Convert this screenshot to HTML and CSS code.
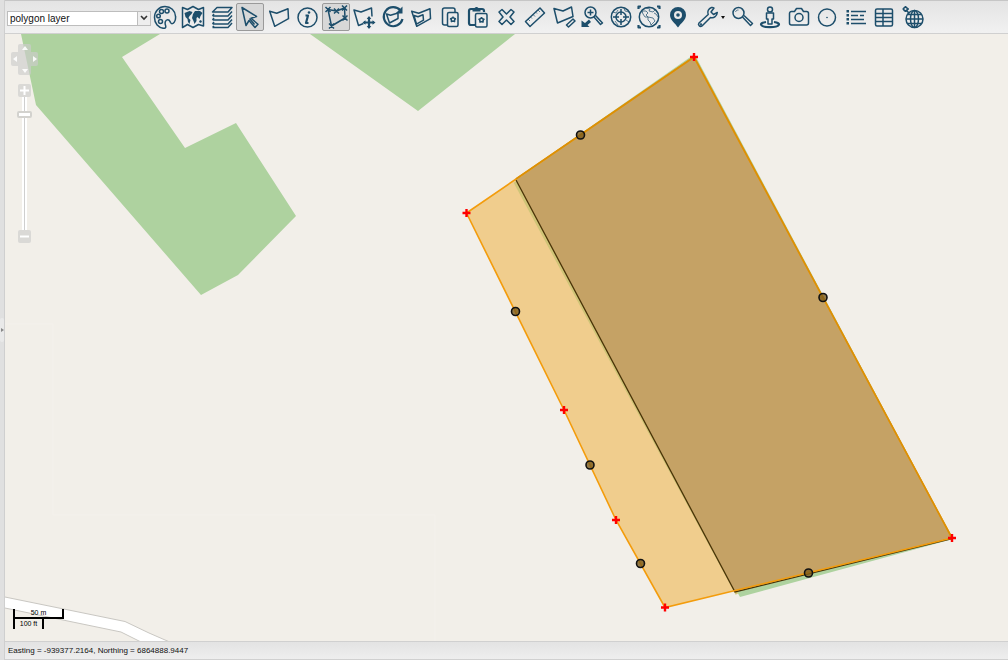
FILE: index.html
```html
<!DOCTYPE html>
<html lang="en">
<head>
<meta charset="utf-8">
<title>Map editor</title>
<link rel="stylesheet" href="styles.css">
</head>
<body>
<div class="app">
  <button class="splitter" type="button" aria-label="Expand side panel"><span class="splitter-grip"></span></button>
  <main class="workspace">
    <div class="toolbar" role="toolbar" aria-label="Map tools">
      <label class="layer-picker">
        <select class="layer-select" aria-label="Layer"><option>polygon layer</option></select>
        <span class="layer-arrow"><svg viewBox="0 0 8 6"><path d="M1 1l3 3 3-3"/></svg></span>
      </label>
      <div class="tools">
        <button class="tool" type="button" aria-label="Style"><svg viewBox="0 0 24 24"><path d="M12 1.500C6 1.500 1.500 6.300 1.500 12.500S5.500 23 10.500 23.300c2 .2 2.700-1 2-3-1-3 0-5.300 2.200-5.500 1.800-.1 2 1 2.800 2.700 1 1.800 2.700 1.300 3.800-.3 1-1.500 1.500-3.500 1.200-6C22 5.500 18 1.500 12 1.500z"/><circle cx="8.500" cy="6.500" r="2"/><circle cx="14" cy="6" r="2"/><circle cx="5.500" cy="11" r="1.800"/><circle cx="7.500" cy="16.500" r="2"/></svg></button>
        <button class="tool" type="button" aria-label="Base map"><svg viewBox="0 0 24 24"><path d="M1.500 2.500l5 2L12 1.500l5.500 3 5-2V21l-5-1.500L12 22.500l-5.500-3-5 3z"/><path class="solid" d="M3.500 8l5-2 3 1-1 2-2 2-1 2 2 2-1 4-1.500-2-.5-3-2-2zM12 9l2-3 5 0 2.500 2-2 3-1 3-2-2-1 1 0 3-2 3-1-3-1.500-3zM18 16l2-1 1 2-2 1z"/></svg></button>
        <button class="tool" type="button" aria-label="Layers"><svg viewBox="0 0 24 24"><path d="M7 2.500h15l-4 4.500H2.500zM2.500 11H18l4-4.500M2.500 15H18l4-4.500M2.500 19H18l4-4.500M2.500 22.500H18l4-4.500M2.500 11l1.500-2M2.500 15L4 13M2.500 19L4 17M2.500 22.500L4 21"/></svg></button>
        <button class="tool pressed" type="button" aria-label="Select" aria-pressed="true"><svg viewBox="0 0 24 24"><path d="M4 2.500l14.500 9-5.500 1.800 7 6-3 3.200-6-7-3 5z"/><path d="M11.500 13.500l5 6"/></svg></button>
        <button class="tool" type="button" aria-label="Draw polygon"><svg viewBox="0 0 24 24"><path d="M2.700 6.300l7 2L21 3.700l.5 10L7.700 21.300z"/></svg></button>
        <button class="tool" type="button" aria-label="Information"><svg viewBox="0 0 24 24"><circle cx="12.500" cy="12.500" r="9.500"/><path class="thick" d="M10.500 10.500H13l-2 7.500h2.500"/><circle class="solid" cx="14" cy="7.500" r="1.300"/></svg></button>
        <button class="tool pressed" type="button" aria-label="Edit vertices" aria-pressed="true"><svg viewBox="0 0 24 24"><path d="M4 4.500L12.500 6 20.500 3l.5 10L7.500 21z"/><path d="M1.500 2l5 5M6.500 2l-5 5M10 3.500l5 5M15 3.500l-5 5M18 .5l5 5M23 .5l-5 5M18.500 10.500l5 5M23.500 10.500l-5 5M5 18.500l5 5M10 18.500l-5 5"/></svg></button>
        <button class="tool" type="button" aria-label="Move"><svg viewBox="0 0 24 24"><path d="M11.500 18.500l-5 2L2 5l7 2 10.500-4 .5 8.500"/><path class="thick" d="M17 12.500v10M12 17.500h10"/><path class="solid" d="M17 11l2.300 3h-4.600zM17 24l2.300-3h-4.600zM10.500 17.500l3-2.300v4.600zM23.500 17.500l-3-2.300v4.600z"/></svg></button>
        <button class="tool" type="button" aria-label="Rotate"><svg viewBox="0 0 24 24"><path class="thick" d="M19.500 5.500A9.500 9.500 0 1 0 21.500 14"/><path class="solid" d="M21.500 1.500v7h-7z"/><path d="M5.500 9l4 1.200L17 8v5.500L8.500 18z"/></svg></button>
        <button class="tool" type="button" aria-label="Resize"><svg viewBox="0 0 24 24"><path d="M2.700 6.300l7 2L21 3.700l.5 10L7.700 21.300z"/><path d="M5 10.500l4 1.200 5-2 .5 5.500-7 4z"/></svg></button>
        <button class="tool" type="button" aria-label="Copy"><svg viewBox="0 0 24 24"><path d="M9 20H6.500a2 2 0 0 1-2-2V5a2 2 0 0 1 2-2h8.500a2 2 0 0 1 2 2v2"/><rect x="9.500" y="7.500" width="10.500" height="14" rx="1.500"/><circle cx="15" cy="14.500" r="1.800"/><path d="M15 11.500v1M12 13.500l1 .5M18 13.500l-1 .5M13 17l.7-.8M17 17l-.7-.8"/></svg></button>
        <button class="tool" type="button" aria-label="Paste"><svg viewBox="0 0 24 24"><path class="thick" d="M9 20H5a2 2 0 0 1-2-2V6a2 2 0 0 1 2-2h11a2 2 0 0 1 2 2v1"/><path class="solid" d="M6.500 6.500V3.500h2C9 1.500 12 1.500 12.500 3.500h2v3z"/><rect x="9.500" y="8.500" width="11.500" height="13.500" rx="1.500"/><circle cx="15.500" cy="15" r="1.800"/><path d="M15.500 12v1M12.500 14l1 .5M18.500 14l-1 .5M13.500 17.500l.7-.8M17.500 17.500l-.7-.8"/></svg></button>
        <button class="tool" type="button" aria-label="Delete"><svg viewBox="0 0 24 24"><path d="M7 4.500l4.500 4.500L16 4.500l3 2.500-4 5 4 4.500-3 3-4.500-4.500L7 19.500l-3-3L8 12 4 7z"/></svg></button>
        <button class="tool" type="button" aria-label="Measure distance"><svg viewBox="0 0 24 24"><path d="M2.500 16.500L17 3l4.500 5L7 21.500z"/><path class="thin" d="M5 14l2 2M7.500 12l1.500 1.500M10 9.500l2 2M12.500 7l1.500 1.500M15 5l2 2"/></svg></button>
        <button class="tool" type="button" aria-label="Measure area"><svg viewBox="0 0 24 24"><path d="M2 3.500l9 2.500 8.500-4 1.500 9.500L5.500 18z"/><path d="M14.500 20l6.500-6 2 2-6.500 6z"/></svg></button>
        <button class="tool" type="button" aria-label="Zoom to layer"><svg viewBox="0 0 24 24"><circle cx="10.500" cy="7.500" r="5.500"/><path d="M7.500 7.500h6M10.500 4.500v6M14 12l6.500 7.500 2-1.500-7-7.500"/><path class="solid" d="M1.500 15.500v6.500h8l-2-2 3.500-3-2-2.500-4 3.500z"/></svg></button>
        <button class="tool" type="button" aria-label="Centre map"><svg viewBox="0 0 24 24"><circle cx="12" cy="12" r="9.700"/><circle cx="12" cy="12" r="5"/><path d="M12 4v6M12 14v6M4 12h6M14 12h6"/><path class="thin" d="M4 7l3 1 2-3M15 3l1 3 4 1M17 15l3 2M6 16l3 4"/></svg></button>
        <button class="tool" type="button" aria-label="Full extent"><svg viewBox="0 0 24 24"><circle cx="12" cy="12" r="9.700"/><path class="thick" d="M1.500 4V1.500H4M20 1.500h2.500V4M22.500 20v2.500H20M4 22.500H1.500V20"/><path class="thin" d="M5 6l4 0 2 2-2 2 2 2-3 0-2-3zM9 3l4 1-1 2 4 1 2-2M11 12l5 1 2 3-4 4-1-3-2-2zM17 8l2 1 2 3"/></svg></button>
        <button class="tool" type="button" aria-label="Find location"><svg viewBox="0 0 24 24"><path class="hole" fill-rule="evenodd" d="M12 2a8 8 0 0 0-8 8c0 5 5 8 8 12.500C15 18 20 15 20 10a8 8 0 0 0-8-8zm0 4a4 4 0 1 1 0 8 4 4 0 0 1 0-8z"/><circle class="solid" cx="12" cy="10" r="1.800"/></svg></button>
      </div>
      <button class="tool tool-menu" type="button" aria-label="Settings" aria-haspopup="menu"><svg viewBox="0 0 24 24"><path d="M15.500 2.500c-3 1-4.500 4-3.300 7L3 18c-1.500 2 1 4.500 3 3l8.500-8.500c3.500 1 6.500-1.500 6.800-5l-3.800 2-2.500-2.500 3-4c-.8-.6-1.500-.8-2.500-.5z"/><circle cx="5" cy="19.500" r=".5"/></svg><span class="menu-caret"></span></button>
      <div class="tools">
        <button class="tool" type="button" aria-label="Search"><svg viewBox="0 0 24 24"><circle cx="8.500" cy="8" r="5.500"/><path d="M12.500 12l8 8.500 2-2-8.500-8"/><path class="thin" d="M5.500 7c.5-1.500 1.500-2 3-2"/></svg></button>
        <button class="tool" type="button" aria-label="Street view"><svg viewBox="0 0 24 24"><circle cx="12" cy="4.500" r="2.500"/><path d="M8.500 8h7v6H14v5h-4v-5H8.500z"/><path class="thick" d="M8 17c-8 1-6 5.200 4 5.200s12-4.200 4-5.200"/></svg></button>
        <button class="tool" type="button" aria-label="Snapshot"><svg viewBox="0 0 24 24"><path d="M4.500 6.500h3l2-3h5l2 3h3a2 2 0 0 1 2 2V18a2 2 0 0 1-2 2h-15a2 2 0 0 1-2-2V8.500a2 2 0 0 1 2-2z"/><circle cx="12" cy="12.500" r="4"/></svg></button>
        <button class="tool" type="button" aria-label="Circle"><svg viewBox="0 0 24 24"><circle cx="12" cy="12.500" r="8.500"/><circle class="solid" cx="12" cy="12.500" r=".8"/></svg></button>
        <button class="tool" type="button" aria-label="Legend"><svg viewBox="0 0 24 24"><path d="M7 6.500h15M7 10.500h7M16 10.500h4M7 14.500h13M7 18.500h15"/><path class="solid" d="M2.500 5h2.500v2.500H2.500zM2.500 9h2.500v2.500H2.500zM2.500 13h2.500v2.500H2.500zM2.500 17h2.500v2.500H2.500z"/></svg></button>
        <button class="tool" type="button" aria-label="Table"><svg viewBox="0 0 24 24"><rect x="3.500" y="4" width="17" height="17" rx="1.500"/><path d="M3.500 8.500h17M3.500 12.500h17M3.500 16.500h17M11 4v17"/></svg></button>
        <button class="tool" type="button" aria-label="Web service"><svg viewBox="0 0 24 24"><circle cx="13.500" cy="14" r="8.500"/><ellipse cx="13.500" cy="14" rx="4" ry="8.500"/><path d="M5 14h17M13.500 5.500v17M6.500 9.500h14M6.500 18.500h14"/><circle cx="4.500" cy="4" r="1.800"/><path d="M4.500 1v1M4.500 6v1M1.500 4h1M6.500 4h1.500M5.500 5.500l3 3"/></svg></button>
      </div>
    </div>

    <section class="map" aria-label="Map">
      <svg class="map-canvas" viewBox="5 34 1003 607" preserveAspectRatio="xMinYMin slice">
        <path class="tile-edge" d="M5 324H53V515H435V641"/>
        <path class="wood" d="M21 34H160L122 57l63 91 51-25 60 93-58 59-37 20L36 105zM310 34H515L418 111z"/>
        <path class="road" d="M0 596L125 621.500 149 633 172 643H143L121 632 0 607z"/>
        <path class="wood" d="M513 181L692.500 55.500 696 57 953 539 740 597z"/>
        <path class="selection" d="M466.500 213L694 57 952 538 665 607.500 616 520 564 410z"/>
        <path class="wood-edge" d="M515 182L737 594"/>
        <path class="field" d="M516 180L694 57 952 538 735 592z"/>
        <path class="field-edge" d="M516 180L735 592 952 538.500"/>
        <path class="outline" d="M466.500 213L694 57 952 538 665 607.500 616 520 564 410z"/>
        <path class="outline-shade" d="M516 179L694 57 952 538"/>
        <g class="midpoint"><circle cx="580.500" cy="135" r="4"/><circle cx="823" cy="297.500" r="4"/><circle cx="808.500" cy="573" r="4"/><circle cx="640.500" cy="563.500" r="4"/><circle cx="590" cy="465" r="4"/><circle cx="515.500" cy="311.500" r="4"/></g>
        <path class="vertex" d="M690 57h8m-4-4v8M462.500 213h8m-4-4v8M560 410h8m-4-4v8M612 520h8m-4-4v8M661 607.500h8m-4-4v8M948 538h8m-4-4v8"/>
      </svg>

      <div class="map-controls">
        <div class="pan-pad">
          <button class="control pan-north" type="button" aria-label="Pan north"><svg viewBox="0 0 6 4"><path d="M3 0l3 4H0z"/></svg></button>
          <button class="control pan-west" type="button" aria-label="Pan west"><svg viewBox="0 0 4 6"><path d="M0 3l4-3v6z"/></svg></button>
          <span class="pan-hub"></span>
          <button class="control pan-east" type="button" aria-label="Pan east"><svg viewBox="0 0 4 6"><path d="M4 3L0 0v6z"/></svg></button>
          <button class="control pan-south" type="button" aria-label="Pan south"><svg viewBox="0 0 6 4"><path d="M3 4L0 0h6z"/></svg></button>
        </div>
        <div class="zoom-bar">
          <button class="control zoom-step" type="button" aria-label="Zoom in"><svg viewBox="0 0 9 9"><path class="sign" d="M0 4.500h9M4.500 0v9"/></svg></button>
          <input class="zoom-slider" type="range" min="0" max="18" value="2" aria-label="Zoom level">
          <button class="control zoom-step" type="button" aria-label="Zoom out"><svg viewBox="0 0 9 9"><path class="sign" d="M0 4.500h9"/></svg></button>
        </div>
      </div>

      <div class="scale">
        <div class="scale-metric">50 m</div>
        <div class="scale-imperial">100 ft</div>
      </div>
    </section>

    <footer class="status">Easting = -939377.2164, Northing = 6864888.9447</footer>
  </main>
</div>
</body>
</html>
```
FILE: styles.css
```css
* { box-sizing: border-box; }

body {
  margin: 0;
  font-family: "Liberation Sans", Arial, sans-serif;
  color: #222;
}

button {
  margin: 0;
  padding: 0;
  border: 0;
  background: none;
  font: inherit;
}

.app { display: flex; height: 100vh; }

.splitter {
  flex: 0 0 5px;
  display: flex;
  align-items: center;
  background: #e0e0e0;
  border-right: 1px solid #cfcfcf;
}
.splitter-grip {
  display: flex;
  align-items: center;
  width: 4px;
  height: 24px;
  background: #e9e9e9;
  border-radius: 2px;
}
.splitter-grip::before {
  content: "";
  margin-left: 1px;
  border: 2px solid transparent;
  border-left: 3px solid #888;
  border-right: 0;
}

.workspace {
  flex: 1;
  min-width: 0;
  display: flex;
  flex-direction: column;
}

.toolbar {
  flex: none;
  display: flex;
  align-items: center;
  height: 34px;
  padding-left: 2px;
  background: linear-gradient(#e4e4e4, #f1f1f1);
  border-top: 1px solid #c6c6c6;
  border-bottom: 1px solid #d0d0d0;
}

.layer-picker {
  display: flex;
  width: 144px;
  height: 15px;
  margin-top: 2px;
  border: 1px solid #bdbdbd;
  background: #fff;
}
.layer-select {
  flex: 1;
  min-width: 0;
  padding: 0 2px;
  border: 0;
  appearance: none;
  background: #fff;
  font-family: inherit;
  font-size: 10px;
  line-height: 13px;
  color: #111;
}
.layer-arrow {
  display: flex;
  align-items: center;
  justify-content: center;
  width: 13px;
  border-left: 1px solid #bdbdbd;
  background: #eee;
  pointer-events: none;
}
.layer-arrow svg {
  width: 8px;
  height: 6px;
  fill: none;
  stroke: #333;
  stroke-width: 1.6;
}

.tools { display: flex; }

.tool {
  display: flex;
  align-items: center;
  justify-content: center;
  width: 28px;
  height: 28px;
  border: 1px solid transparent;
  border-radius: 2px;
}
.tool:nth-child(2n) { margin-right: 1px; }
.tool.pressed { background: #d8d8d8; border-color: #9a9a9a; }
.tool svg {
  flex: none;
  width: 24px;
  height: 24px;
  fill: none;
  stroke: #1d4e6b;
  stroke-width: 1.5;
  stroke-linejoin: round;
}
.tool .solid, .tool .hole { fill: #1d4e6b; stroke: none; }
.tool .thick { stroke-width: 2.2; }
.tool .thin { stroke-width: 0.7; }

.tools .tool:last-child { margin-right: 0; }
.tool-menu { width: 36px; gap: 1px; }
.menu-caret {
  border: 2px solid transparent;
  border-top: 3px solid #111;
  border-bottom: 0;
}

.map {
  position: relative;
  flex: 1;
  min-height: 0;
  overflow: hidden;
  background: #f2efe9;
}
.map-canvas { display: block; width: 100%; height: 100%; }
.tile-edge { fill: none; stroke: #f4f1ec; }
.wood { fill: #aed29f; }
.road { fill: #fff; stroke: #c9c7c2; }
.selection { fill: #f0cd8d; }
.wood-edge { stroke: #cfc477; stroke-width: 3; }
.field { fill: #c5a265; }
.field-edge { fill: none; stroke: #4a3408; stroke-width: 1.3; }
.outline { fill: none; stroke: #f39c0c; stroke-width: 1.6; }
.outline-shade { fill: none; stroke: #db9007; stroke-width: 1.6; }
.midpoint { fill: #7a5a1c; fill-opacity: 0.8; stroke: #111; stroke-width: 1.6; }
.vertex { stroke: #f00; stroke-width: 2.4; }

.map-controls {
  position: absolute;
  left: 6px;
  top: 10px;
  display: flex;
  flex-direction: column;
  align-items: center;
  gap: 9px;
}
.control, .pan-hub { background: rgba(204, 204, 204, 0.65); }
.control {
  display: flex;
  align-items: center;
  justify-content: center;
}
.control svg { fill: #fff; fill-opacity: 0.9; }
.pan-pad {
  display: grid;
  grid-template-columns: 7px 13px 7px;
  grid-template-rows: 8px 14px 9px;
  grid-template-areas: ". n ." "w c e" ". s .";
}
.pan-north { grid-area: n; border-radius: 2px 2px 0 0; }
.pan-west { grid-area: w; border-radius: 2px 0 0 2px; }
.pan-hub { grid-area: c; }
.pan-east { grid-area: e; border-radius: 0 2px 2px 0; }
.pan-south { grid-area: s; border-radius: 0 0 2px 2px; }
.pan-north svg, .pan-south svg { width: 6px; height: 4px; }
.pan-west svg, .pan-east svg { width: 4px; height: 6px; }

.zoom-bar {
  display: flex;
  flex-direction: column;
  align-items: center;
}
.zoom-step { width: 13px; height: 13px; border-radius: 2px; }
.zoom-step svg { width: 9px; height: 9px; }
.sign { stroke: #fff; stroke-width: 2; }
.zoom-slider {
  width: 15px;
  height: 133px;
  margin: 0;
  appearance: none;
  writing-mode: vertical-lr;
  background: linear-gradient(90deg, transparent 5px, #fff 5px, #fff 7px, #cfcfcf 7px, #cfcfcf 8px, #fff 8px, #fff 10px, transparent 10px);
}
.zoom-slider::-webkit-slider-thumb {
  appearance: none;
  width: 15px;
  height: 7px;
  border: 2px solid #d3d2ce;
  border-radius: 2px;
  background: #fff;
}

.scale {
  position: absolute;
  left: 8px;
  bottom: 12px;
  width: 51px;
  font-size: 7px;
  line-height: 8px;
  text-align: center;
  color: #000;
}
.scale-metric { border: 2px solid #000; border-top: 0; }
.scale-imperial {
  width: 31px;
  height: 10px;
  line-height: 10px;
  border: 1px solid #000;
  border-width: 0 2px;
  white-space: nowrap;
}

.status {
  flex: none;
  height: 19px;
  padding-left: 3px;
  border-top: 1px solid #d0d0d0;
  border-bottom: 1px solid #d0d0d0;
  background: linear-gradient(#e3e3e3, #eeeeee);
  font-size: 8px;
  line-height: 18px;
  color: #111;
}
```
